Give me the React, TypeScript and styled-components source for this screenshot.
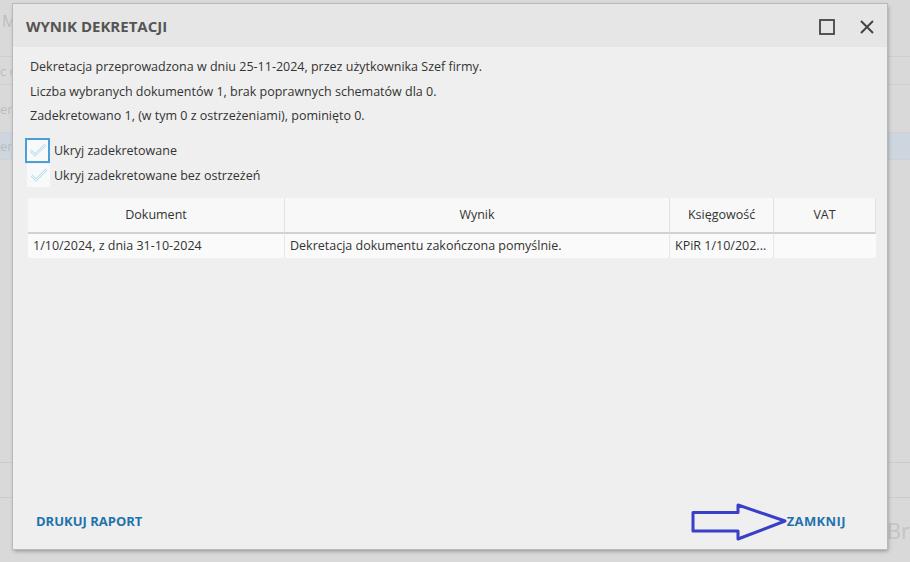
import React from 'react';
import styled, { createGlobalStyle } from 'styled-components';

const GlobalStyle = createGlobalStyle`
    html, body {
        margin: 0;
        padding: 0;
        background: #d8d8d8;
        font-family: 'Open Sans', 'Noto Sans', sans-serif;
    }
`;

const Screen = styled.div`
    position: relative;
    width: 910px;
    height: 562px;
    overflow: hidden;
    background: #d9d9d9;
`;

const Backdrop = styled.div`
    display: flex;
    flex-direction: column;
    height: 100%;
    color: #bdbdbd;
    font-size: 13px;
`;

const BackTitle = styled.div`
    height: 57px;
    padding: 10px 0 0 2px;
    box-sizing: border-box;
    font-size: 16px;
    border-bottom: 1px solid #cfcfcf;
`;

const BackRow = styled.div<{ $highlight?: boolean; $height: number }>`
    height: ${(p) => p.$height}px;
    display: flex;
    align-items: center;
    box-sizing: border-box;
    border-bottom: 1px solid #d0d0d0;
    background: ${(p) => (p.$highlight ? '#cdd6de' : 'transparent')};
    white-space: nowrap;
`;

const BackFill = styled.div`
    flex: 1;
`;

const BackFooter = styled.div`
    height: 36px;
    border-top: 1px solid #cccccc;
    border-bottom: 1px solid #cccccc;
    box-sizing: border-box;
`;

const BackBottom = styled.div`
    height: 64px;
    display: flex;
    justify-content: flex-end;
    align-items: center;
    font-size: 22px;
    color: #c4c4c4;
`;

const Dialog = styled.div`
    position: absolute;
    left: 13px;
    top: 4px;
    width: 874px;
    height: 545px;
    display: flex;
    flex-direction: column;
    background: #efefef;
    box-shadow: 0 0 0 1px #b9b9b9, 1px 2px 4px rgba(0, 0, 0, 0.35);
`;

const Header = styled.div`
    height: 43px;
    flex: none;
    display: flex;
    align-items: center;
    justify-content: space-between;
    padding: 0 9px 0 13px;
    background: #e6e6e6;
`;

const Title = styled.h1`
    margin: 0;
    font-size: 15px;
    font-weight: 700;
    color: #555555;
`;

const HeaderIcons = styled.div`
    display: flex;
    align-items: center;
    gap: 18px;
    padding-top: 2px;
`;

const IconButton = styled.button`
    width: 22px;
    height: 22px;
    padding: 0;
    border: none;
    background: transparent;
    display: flex;
    align-items: center;
    justify-content: center;
    cursor: pointer;
`;

const Body = styled.div`
    flex: 1;
    display: flex;
    flex-direction: column;
    padding: 8px 12px 0 14px;
`;

const InfoLine = styled.p`
    margin: 0;
    height: 24.5px;
    line-height: 24px;
    font-size: 12.5px;
    color: #333333;
    padding-left: 3px;
`;

const Options = styled.div`
    display: flex;
    flex-direction: column;
    margin-top: 9px;
`;

const OptionRow = styled.label`
    display: flex;
    align-items: center;
    gap: 4px;
    height: 25px;
    font-size: 12.5px;
    color: #333333;
`;

const Box = styled.span<{ $focused?: boolean }>`
    width: 23px;
    height: 23px;
    box-sizing: border-box;
    display: flex;
    align-items: center;
    justify-content: center;
    background: #f7f9fa;
    border: 1px solid ${(p) => (p.$focused ? '#4a9fd6' : 'transparent')};
    box-shadow: ${(p) => (p.$focused ? '0 0 0 1px #4a9fd6' : 'none')};
    margin-left: ${(p) => (p.$focused ? '-1px' : '0')};
    margin-right: ${(p) => (p.$focused ? '1px' : '0')};
`;

const Table = styled.div`
    margin-top: 10px;
    margin-left: 1px;
    width: 848px;
    display: grid;
    grid-template-columns: 257px 385px 104px 102px;
`;

const HeadCell = styled.div`
    height: 34px;
    display: flex;
    align-items: center;
    justify-content: center;
    background: #f8f8f8;
    border-right: 1px solid #e2e2e2;
    border-bottom: 2px solid #d2d2d2;
    font-size: 12.5px;
    color: #333333;
    &:last-child {
        border-right: none;
    }
`;

const Cell = styled.div`
    height: 24px;
    display: flex;
    align-items: center;
    padding: 0 5px;
    background: #fafafa;
    border-right: 1px solid #e6e6e6;
    font-size: 12.5px;
    color: #333333;
    white-space: nowrap;
    overflow: hidden;
    &:last-child {
        border-right: none;
    }
`;

const Footer = styled.div`
    height: 56px;
    flex: none;
    display: flex;
    align-items: center;
    justify-content: space-between;
    padding: 0 41px 0 23px;
`;

const LinkButton = styled.button<{ $wide?: boolean }>`
    position: relative;
    border: none;
    background: transparent;
    padding: 0;
    font-family: 'Open Sans', 'Noto Sans', sans-serif;
    font-size: 13px;
    font-weight: 700;
    letter-spacing: ${(p) => (p.$wide ? '0.4px' : '0')};
    color: #1f73ad;
    cursor: pointer;
`;

const Arrow = styled.svg`
    position: absolute;
    right: 100%;
    top: 50%;
    margin-top: -18px;
`;

const Check = () => (
    <svg width="18" height="14" viewBox="0 0 18 14">
        <path
            d="M1.5 7.5 L6 12 L16.5 1.5"
            fill="none"
            stroke="#bfe0ef"
            strokeWidth="2.6"
        />
        <path
            d="M1.5 7.5 L6 12 L16.5 1.5"
            fill="none"
            stroke="#f7f9fa"
            strokeWidth="0.9"
        />
    </svg>
);

const backRows = [
    { h: 28, text: 'c o' },
    { h: 48, text: 'ern' },
    { h: 27, text: 'ern', highlight: true },
];

export default function App() {
    return (
        <>
            <GlobalStyle />
            <Screen>
                <Backdrop>
                    <BackTitle>M</BackTitle>
                    {backRows.map((r, i) => (
                        <BackRow key={i} $height={r.h} $highlight={r.highlight}>
                            {r.text}
                        </BackRow>
                    ))}
                    <BackFill />
                    <BackFooter />
                    <BackBottom>Br</BackBottom>
                </Backdrop>
                <Dialog>
                    <Header>
                        <Title>WYNIK DEKRETACJI</Title>
                        <HeaderIcons>
                            <IconButton aria-label="Maksymalizuj">
                                <svg width="16" height="16" viewBox="0 0 16 16">
                                    <rect x="1" y="1" width="14" height="14" fill="none" stroke="#444" strokeWidth="1.8" />
                                </svg>
                            </IconButton>
                            <IconButton aria-label="Zamknij">
                                <svg width="14" height="14" viewBox="0 0 14 14">
                                    <path d="M1 1 L13 13 M13 1 L1 13" stroke="#444" strokeWidth="2" />
                                </svg>
                            </IconButton>
                        </HeaderIcons>
                    </Header>
                    <Body>
                        <InfoLine>Dekretacja przeprowadzona w dniu 25-11-2024, przez użytkownika Szef firmy.</InfoLine>
                        <InfoLine>Liczba wybranych dokumentów 1, brak poprawnych schematów dla 0.</InfoLine>
                        <InfoLine>Zadekretowano 1, (w tym 0 z ostrzeżeniami), pominięto 0.</InfoLine>
                        <Options>
                            <OptionRow>
                                <Box $focused>
                                    <Check />
                                </Box>
                                Ukryj zadekretowane
                            </OptionRow>
                            <OptionRow>
                                <Box>
                                    <Check />
                                </Box>
                                Ukryj zadekretowane bez ostrzeżeń
                            </OptionRow>
                        </Options>
                        <Table>
                            <HeadCell>Dokument</HeadCell>
                            <HeadCell>Wynik</HeadCell>
                            <HeadCell>Księgowość</HeadCell>
                            <HeadCell>VAT</HeadCell>
                            <Cell>1/10/2024, z dnia 31-10-2024</Cell>
                            <Cell>Dekretacja dokumentu zakończona pomyślnie.</Cell>
                            <Cell>KPiR 1/10/202...</Cell>
                            <Cell />
                        </Table>
                    </Body>
                    <Footer>
                        <LinkButton>DRUKUJ RAPORT</LinkButton>
                        <LinkButton $wide>
                            <Arrow width="96" height="38" viewBox="0 0 96 38">
                                <path
                                    d="M2 9.5 L47 9.5 L47 2 L94 18 L47 36 L47 28 L2 28 Z"
                                    fill="none"
                                    stroke="#3a3fc8"
                                    strokeWidth="3"
                                    strokeLinejoin="round"
                                />
                            </Arrow>
                            ZAMKNIJ
                        </LinkButton>
                    </Footer>
                </Dialog>
            </Screen>
        </>
    );
}
